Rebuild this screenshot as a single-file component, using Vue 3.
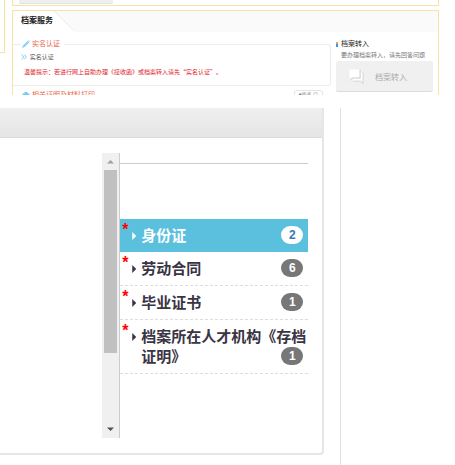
<script setup>
import { ref } from "vue";

const materials = ref([
  { id: 1, name: "身份证", count: 2 },
  { id: 2, name: "劳动合同", count: 6 },
  { id: 3, name: "毕业证书", count: 1 },
  { id: 4, name: "档案所在人才机构《存档证明》", count: 1 },
]);

const activeId = ref(1);

const select = (id) => {
  activeId.value = id;
};
</script>

<template>
  <div class="page">
    <header class="preview">
      <div class="side-box"></div>
      <div class="preview-main">
        <div class="box box-prev">
          <div class="prev-button"></div>
        </div>
        <section class="box box-service">
          <div class="tab-bar">
            <h2 class="tab">档案服务</h2>
            <svg class="tab-edge" width="21" height="21" viewBox="0 0 21 21">
              <path d="M0 0 Q3 1 6 5 L20 19 L21 21 H0Z" fill="#fff" />
              <path d="M0 0 Q3 1 6 5 L20 19" fill="none" stroke="#ececec" />
            </svg>
          </div>
          <div class="service-body">
            <div class="groups">
              <fieldset class="group">
                <legend>
                  <svg width="8" height="8" viewBox="0 0 8 8">
                    <path d="M0 8 L1 5.5 L5.5 1 L7.2 2.6 L2.6 7.1Z" fill="#8fd0f7" />
                    <path d="M6 0.6 L6.6 0 L8 1.4 L7.5 2Z" fill="#8fd0f7" />
                  </svg>
                  实名认证
                </legend>
                <a class="group-link" href="#">
                  <svg width="6" height="6" viewBox="0 0 6 6">
                    <path
                      d="M0.5 0.5 L2.8 3 L0.5 5.5 M3.1 0.5 L5.4 3 L3.1 5.5"
                      fill="none"
                      stroke="#7cc4f2"
                      stroke-width="0.9"
                    />
                  </svg>
                  实名认证
                </a>
                <p class="tip">
                  温馨提示：若进行网上自助办理《接收函》或档案转入请先“实名认证”。
                </p>
              </fieldset>
              <div class="next-group">
                <span class="next-title">
                  <svg width="8" height="8" viewBox="0 0 8 8">
                    <path d="M2.5 1 H5.5 V2.5 H7.5 V7 H0.5 V2.5 H2.5Z" fill="#7cc8f4" />
                  </svg>
                  相关证明及材料打印
                </span>
                <a class="more" href="#">■更多 ◎</a>
              </div>
            </div>
            <aside class="transfer">
              <h3>档案转入</h3>
              <p>要办理档案转入，请先回答问题</p>
              <button type="button" class="transfer-btn">
                <svg width="15" height="15" viewBox="0 0 15 15">
                  <path d="M0.5 0.5 H11 V9 H3 L0.5 11.5Z" fill="#fff" />
                  <path
                    d="M0.5 11.5 L3 9 H11 V0.5 M14 3.5 V14.5 L11.5 12 H4"
                    fill="none"
                    stroke="#cfcfcf"
                  />
                  <path d="M12 3.5 H13.5 V13 L12 11.5 H4 V10 H12Z" fill="#fff" />
                </svg>
                <span>档案转入</span>
              </button>
            </aside>
          </div>
        </section>
      </div>
    </header>

    <main class="panel">
      <section class="card">
        <div class="card-header"></div>
        <div class="card-body">
          <div class="document"></div>
          <div class="scroll-bar" aria-hidden="true">
            <svg width="17" height="17" viewBox="0 0 17 17">
              <path d="M5 10.5 L8.5 7 L12 10.5Z" fill="#a0a0a0" />
            </svg>
            <div class="scroll-thumb"></div>
            <svg width="17" height="17" viewBox="0 0 17 17">
              <path d="M5 6.5 L8.5 10 L12 6.5Z" fill="#505050" />
            </svg>
          </div>
          <nav class="sidebar">
            <ul class="materials">
              <li v-for="item in materials" :key="item.id">
                <a
                  href="#"
                  class="material"
                  :class="{ active: item.id === activeId }"
                  @click.prevent="select(item.id)"
                >
                  <span class="required">*</span>
                  <span class="caret"></span>
                  <span class="label">
                    {{ item.name }}<span class="badge">{{ item.count }}</span>
                  </span>
                </a>
              </li>
            </ul>
          </nav>
        </div>
      </section>
    </main>
  </div>
</template>

<style>
body {
  margin: 0;
  background: #fff;
}
</style>

<style scoped>
.page {
  font-family: "Liberation Sans", "Noto Sans CJK SC", sans-serif;
  color: #333;
}

.page * {
  box-sizing: border-box;
}

a {
  color: inherit;
  text-decoration: none;
}

h2,
h3,
p,
ul {
  margin: 0;
  padding: 0;
}

/* Top preview strip, cut off at its lower edge */
.preview {
  display: flex;
  align-items: flex-start;
  gap: 7px;
  height: 95px;
  padding-right: 16px;
  overflow: hidden;
}

.side-box {
  width: 5px;
  height: 53px;
  background: #fffffb;
  border-right: 1px solid #f9e3a4;
  border-bottom: 1px solid #f9e3a4;
}

.preview-main {
  flex: 1;
  min-width: 0;
}

.box {
  border: 1px solid #f9e3a4;
  background: #fff;
}

.box-prev {
  border-top: none;
  padding: 0 6px 1px;
  margin-bottom: 4px;
}

.prev-button {
  width: 94px;
  height: 4px;
  background: #efefef;
  border-bottom: 1px solid #e2e2e2;
  border-radius: 0 0 2px 2px;
}

.tab-bar {
  display: flex;
  height: 21px;
  background: #fafafa;
}

.tab {
  padding-left: 8px;
  background: #fff;
  font-size: 8px;
  line-height: 20px;
  font-weight: 700;
  color: #222;
}

.service-body {
  display: flex;
  gap: 5px;
  padding: 6px 5px 0 0;
}

.groups {
  flex: 1;
  min-width: 0;
}

.group {
  min-width: 0;
  margin: 0;
  padding: 0 0 5px 8px;
  border: 1px solid #ececec;
  border-left: none;
  border-radius: 0 3px 3px 0;
}

.group legend {
  padding: 0 4px 0 1px;
  font-size: 7px;
  line-height: 12px;
  color: #e8684a;
}

legend svg,
.group-link svg,
.next-title svg {
  vertical-align: middle;
}

.group-link {
  display: block;
  font-size: 6px;
  line-height: 14px;
  color: #555;
}

.group-link svg {
  margin-right: 1px;
}

.tip {
  padding-left: 3px;
  font-family: "Noto Sans CJK SC", sans-serif;
  font-size: 6px;
  line-height: 16px;
  color: #e0232e;
  white-space: nowrap;
}

.next-group {
  display: flex;
  justify-content: space-between;
  align-items: flex-start;
  padding: 3px 8px 0 9px;
}

.next-title {
  font-size: 7px;
  line-height: 12px;
  color: #e8684a;
}

.more {
  margin-top: 1px;
  padding: 0 4px;
  border: 1px solid #e4e4e4;
  border-radius: 3px;
  font-size: 5px;
  line-height: 7px;
  color: #888;
}

.transfer {
  width: 97px;
}

.transfer h3 {
  display: flex;
  align-items: center;
  gap: 3px;
  font-size: 7px;
  line-height: 12px;
  font-weight: 400;
  color: #222;
}

.transfer h3::before {
  content: "";
  width: 2px;
  height: 5px;
  background: linear-gradient(#f0a04c 40%, #3c92e6 40%);
}

.transfer p {
  padding-left: 5px;
  font-size: 6px;
  line-height: 11px;
  color: #777;
  white-space: nowrap;
}

.transfer-btn {
  display: flex;
  align-items: center;
  gap: 11px;
  width: 100%;
  height: 31px;
  padding: 0 13px;
  border: none;
  border-bottom: 1px solid #dcdcdc;
  border-radius: 2px;
  background: #f0f0f0;
  font-family: inherit;
  font-size: 8px;
  color: #aaa;
}

/* Document panel */
.panel {
  width: 75%;
  margin-top: 13px;
  padding-bottom: 10px;
  border-right: 1px solid #e0e0e0;
  box-sizing: border-box;
}

.card {
  margin-right: 16px;
  border: 2px solid #e6e6e6;
  border-width: 0 2px 2px 0;
  border-radius: 0 0 4px 0;
}

.card-header {
  height: 30px;
  border-bottom: 1px solid #dcdcdc;
  background: linear-gradient(#efefef, #e5e5e5);
}

.card-body {
  display: flex;
  padding: 15px 14px 15px 0;
}

.document {
  flex: 1;
}

.scroll-bar {
  display: flex;
  flex-direction: column;
  width: 17px;
  background: #f0f0f0;
}

.scroll-thumb {
  height: 183px;
  margin: 0 2px;
  background: #c0c0c0;
}

.scroll-bar svg:last-child {
  margin-top: auto;
}

.sidebar {
  width: 189px;
  min-height: 285px;
  padding-top: 10px;
  border-left: 1px solid #ccc;
}

.materials {
  padding-top: 55px;
  border-top: 1px solid #ccc;
  list-style: none;
}

.material {
  display: flex;
  padding: 6px 2px 7px;
  border-bottom: 1px dashed #ddd;
  font-size: 15px;
  line-height: 20px;
  font-weight: 700;
  color: #3a3444;
}

.material.active {
  border-bottom: none;
  background: #5bc0de;
  color: #fff;
}

.required {
  width: 10px;
  margin-top: -4px;
  font-size: 16px;
  line-height: 17px;
  color: #f00;
}

.caret {
  width: 4px;
  height: 8px;
  margin: 7px 5px 0 0;
  background: currentColor;
  clip-path: polygon(0 0, 100% 50%, 0 100%);
}

.label {
  flex: 1;
  font-family: "Noto Sans CJK SC", sans-serif;
}

.badge {
  float: right;
  min-width: 22px;
  margin: 1px 3px 0 0;
  border-radius: 9px;
  background: #777;
  font-family: "Liberation Sans", sans-serif;
  font-size: 12px;
  line-height: 18px;
  text-align: center;
  color: #fff;
}

.active .badge {
  background: #fff;
  color: #337ab7;
}
</style>
